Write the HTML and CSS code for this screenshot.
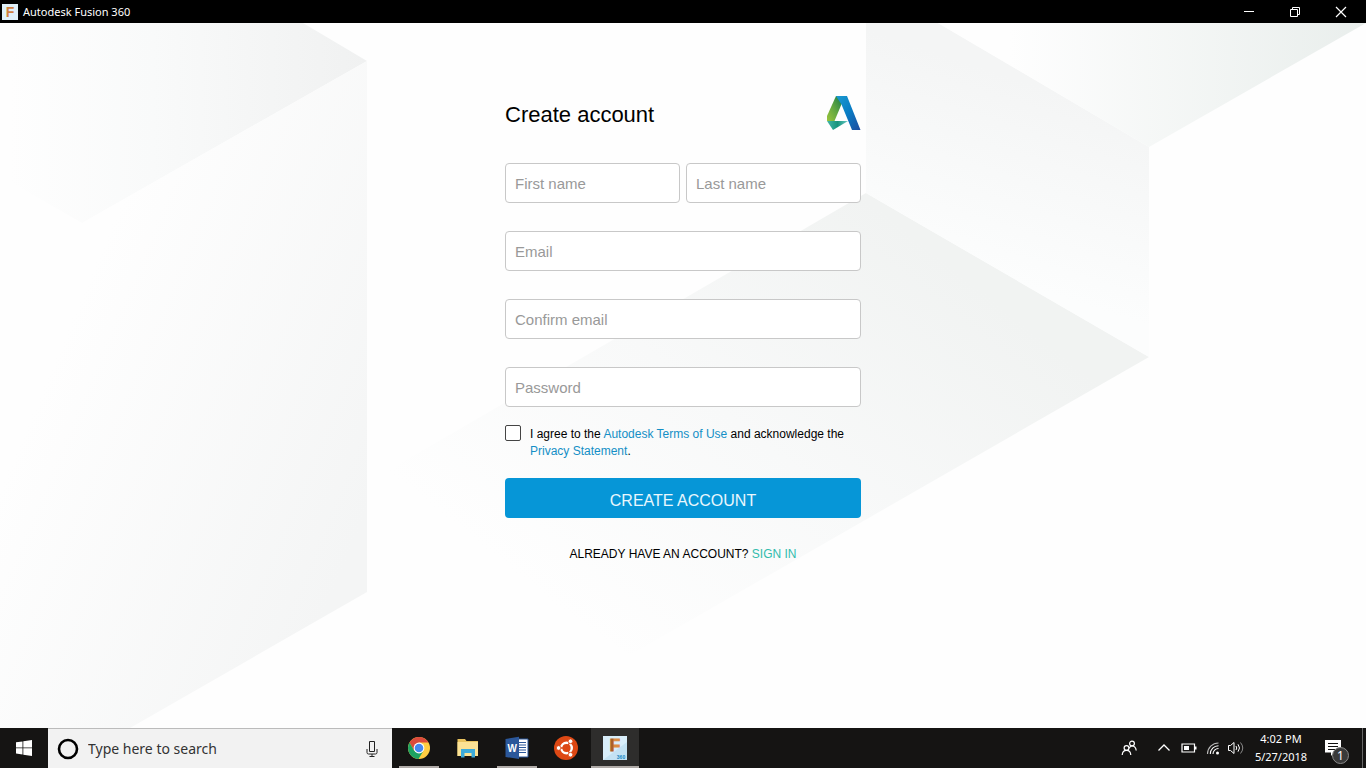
FILE: index.html
```html
<!DOCTYPE html>
<html lang="en">
<head>
<meta charset="utf-8">
<title>Autodesk Fusion 360</title>
<link rel="stylesheet" href="styles.css">
</head>
<body>
<header class="titlebar">
  <svg class="app-icon" viewBox="0 0 16 16" aria-hidden="true">
    <rect width="16" height="16" fill="#dff0f9"/>
    <text class="glyph" x="8" y="13" font-size="14" fill="#d08040">F</text>
  </svg>
  <span class="app-name">Autodesk Fusion 360</span>
  <div class="window-controls">
    <button type="button" aria-label="Minimize"><svg viewBox="0 0 12 12"><path d="M1 5.500h10" stroke="#fff" fill="none"/></svg></button>
    <button type="button" aria-label="Restore"><svg viewBox="0 0 12 12"><path d="M1.500 3.500h7v7h-7zM3.500 3.500v-2h7v7h-2" stroke="#fff" fill="none"/></svg></button>
    <button type="button" aria-label="Close"><svg viewBox="0 0 12 12"><path d="M1 1l10 10M11 1L1 11" stroke="#fff" stroke-width="1.200" fill="none"/></svg></button>
  </div>
</header>

<main class="page">
  <svg class="backdrop" viewBox="0 0 1366 705" preserveAspectRatio="none" aria-hidden="true">
    <defs>
      <linearGradient id="top-left" gradientUnits="userSpaceOnUse" x1="10" y1="0" x2="367" y2="0"><stop offset="0" stop-color="#fefefe"/><stop offset=".4" stop-color="#f9fafa"/><stop offset="1" stop-color="#f0f1f1"/></linearGradient>
      <linearGradient id="left" gradientUnits="userSpaceOnUse" x1="70" y1="300" x2="390" y2="435"><stop offset="0" stop-color="#fefefe"/><stop offset="1" stop-color="#f4f5f5"/></linearGradient>
      <linearGradient id="middle" gradientUnits="userSpaceOnUse" x1="1000" y1="50" x2="940" y2="235"><stop offset="0" stop-color="#f4f5f5"/><stop offset="1" stop-color="#fcfdfd"/></linearGradient>
      <linearGradient id="floor" gradientUnits="userSpaceOnUse" x1="960" y1="250" x2="640" y2="650"><stop offset="0" stop-color="#f1f3f2"/><stop offset=".5" stop-color="#f8f9f9"/><stop offset="1" stop-color="#fefefe"/></linearGradient>
      <linearGradient id="top-right" gradientUnits="userSpaceOnUse" x1="1010" y1="0" x2="1366" y2="0"><stop offset="0" stop-color="#fefefe"/><stop offset="1" stop-color="#e9eeec"/></linearGradient>
    </defs>
    <path d="M0 0H303L367 38L82 200L0 153z" fill="url(#top-left)"/>
    <path d="M82 200L367 38V569L130 705H0V153z" fill="url(#left)"/>
    <path d="M866 170L1149 334L630 632L370 458z" fill="url(#floor)"/>
    <path d="M866 0H938L1149 124V334L866 170z" fill="url(#middle)"/>
    <path d="M938 0H1366L1149 124z" fill="url(#top-right)"/>
  </svg>

  <form class="signup">
    <div class="signup-head">
      <h1>Create account</h1>
      <svg class="logo" viewBox="0 0 34 34" role="img" aria-label="Autodesk">
        <defs>
          <linearGradient id="green" x1="0" y1="1" x2="1" y2="0"><stop offset="0" stop-color="#9bc53d"/><stop offset=".5" stop-color="#60a641"/><stop offset="1" stop-color="#18794a"/></linearGradient>
          <linearGradient id="blue" x1="0" y1="0" x2="1" y2="1"><stop offset="0" stop-color="#1c9bd0"/><stop offset=".5" stop-color="#087cc4"/><stop offset="1" stop-color="#204b9e"/></linearGradient>
          <linearGradient id="teal" x1="0" y1="0" x2="1" y2="0"><stop offset="0" stop-color="#42b7a8"/><stop offset=".5" stop-color="#16947c"/><stop offset="1" stop-color="#6bcac7"/></linearGradient>
        </defs>
        <path d="M9 0H13L15 7L7.500 25H0V20z" fill="url(#green)"/>
        <path d="M0 25H21L6 34z" fill="url(#teal)"/>
        <path d="M9 0H20L33.500 34H25L14.500 8.500z" fill="url(#blue)"/>
      </svg>
    </div>
    <div class="fields">
      <div class="name-row">
        <input type="text" placeholder="First name" aria-label="First name">
        <input type="text" placeholder="Last name" aria-label="Last name">
      </div>
      <input type="email" placeholder="Email" aria-label="Email">
      <input type="email" placeholder="Confirm email" aria-label="Confirm email">
      <input type="password" placeholder="Password" aria-label="Password">
    </div>
    <div class="agree">
      <input type="checkbox" id="agree">
      <label for="agree">I agree to the <a href="#terms">Autodesk Terms of Use</a> and acknowledge the <a href="#privacy">Privacy Statement</a>.</label>
    </div>
    <button class="submit" type="submit">CREATE ACCOUNT</button>
    <p class="signin">ALREADY HAVE AN ACCOUNT? <a href="#signin">SIGN IN</a></p>
  </form>
</main>

<footer class="taskbar">
  <button class="start" type="button" aria-label="Start">
    <svg viewBox="0 0 16 16"><path d="M0 2.300L6.500 1.400V7.500H0zM7.300 1.300L16 0V7.500H7.300zM0 8.300H6.500V14.500L0 13.600zM7.300 8.300H16V16L7.300 14.700z" fill="#fff"/></svg>
  </button>
  <div class="search">
    <svg class="cortana" viewBox="0 0 22 22" aria-hidden="true"><circle cx="11" cy="11" r="9" fill="none" stroke="#000" stroke-width="2.600"/></svg>
    <input type="search" placeholder="Type here to search" aria-label="Type here to search">
    <button type="button" aria-label="Voice search"><svg viewBox="0 0 12 16"><path d="M3.500 .500h5v10h-5zM1 8v3.500q0 1.500 1.500 1.500h7q1.500 0 1.500-1.500V8M6 13v2.500M3.500 15.500h5" fill="none" stroke="#222"/></svg></button>
  </div>
  <nav class="apps" aria-label="Apps">
    <button class="open" type="button" aria-label="Chrome">
      <svg viewBox="0 0 24 24">
        <circle cx="12" cy="12" r="11" fill="#ffcd42"/>
        <path d="M2.500 6.500A11 11 0 0 1 21.500 6.500H12L7.200 14.800z" fill="#dc4a3c"/>
        <path d="M2.500 6.500A11 11 0 0 0 11.500 23L16.500 14.800L12 17L7.200 14.800z" fill="#1da261"/>
        <circle cx="12" cy="12" r="5.400" fill="#fff"/><circle cx="12" cy="12" r="4.300" fill="#4688f1"/>
      </svg>
    </button>
    <button type="button" aria-label="File Explorer">
      <svg viewBox="0 0 24 24">
        <path d="M1.500 3H9l1.500 2H22v15H1.500z" fill="#e9c35e"/>
        <path d="M1.500 6H22v14H1.500z" fill="#fbe294"/>
        <path d="M5 13h14v8.500H15.500V17H8.500v4.500H5z" fill="#3cabda"/>
      </svg>
    </button>
    <button class="open" type="button" aria-label="Word">
      <svg viewBox="0 0 24 24">
        <path d="M13 3h10v18H13z" fill="#fff" stroke="#2b579a"/>
        <path d="M14 6.500h7M14 9h7M14 11.500h7M14 14h7M14 16.500h7" stroke="#2b579a"/>
        <path d="M.500 3L14 .800V23L.500 21z" fill="#2b579a"/>
        <text class="glyph" x="7.200" y="15.500" font-size="10" fill="#fff">W</text>
      </svg>
    </button>
    <button type="button" aria-label="Ubuntu">
      <svg viewBox="0 0 24 24">
        <circle cx="12" cy="12" r="12" fill="#dd4814"/>
        <circle cx="12.500" cy="12" r="5.300" fill="none" stroke="#fff" stroke-width="2.400"/>
        <path d="M12.500 12L5 12M12.500 12L16.300 5.500M12.500 12L16.300 18.500" stroke="#dd4814" stroke-width="1.400"/>
        <g fill="#fff" stroke="#dd4814" stroke-width=".8"><circle cx="4.600" cy="12" r="2.300"/><circle cx="16.500" cy="5.300" r="2.300"/><circle cx="16.500" cy="18.700" r="2.300"/></g>
      </svg>
    </button>
    <button class="current" type="button" aria-label="Autodesk Fusion 360">
      <svg viewBox="0 0 24 24">
        <defs><linearGradient id="bronze"><stop offset=".3" stop-color="#a95f28"/><stop offset=".4" stop-color="#dc8b41"/></linearGradient></defs>
        <rect width="24" height="24" fill="#d9eefa"/><path d="M0 24L24 6V24z" fill="#c4e2f3"/>
        <text class="glyph" x="12" y="15" font-size="17" fill="url(#bronze)" stroke="url(#bronze)">F</text>
        <text class="glyph" x="18" y="23" font-size="5" fill="#1688c5">360</text>
      </svg>
    </button>
  </nav>
  <div class="tray">
    <button class="people" type="button" aria-label="People"><svg viewBox="0 0 16 16"><g fill="none" stroke="#fff" stroke-width="1.200"><circle cx="5.500" cy="8" r="2.400"/><circle cx="11" cy="3.500" r="2.400"/><path d="M1.200 15q.3-4.600 4.300-4.600t4.300 4.600M8.200 8.200Q9 6 11 6q3.700 0 4.200 4.500"/></g></svg></button>
    <button class="chevron" type="button" aria-label="Show hidden icons"><svg viewBox="0 0 16 16"><path d="M2.500 10.500L8 5l5.500 5.500" fill="none" stroke="#fff" stroke-width="1.300"/></svg></button>
    <button type="button" aria-label="Battery"><svg viewBox="0 0 16 16"><path d="M1 4h12.500v8H1z" fill="none" stroke="#fff" stroke-width="1.200"/><path d="M3 6H8v4H3zM14 6.500h1.500v3H14z" fill="#fff"/></svg></button>
    <button type="button" aria-label="Network"><svg viewBox="0 0 16 16"><g fill="none" stroke="#fff" stroke-width="1.100"><path d="M2.500 14A11 11 0 0 1 13.500 3" opacity=".7"/><path d="M5.300 14A8.200 8.200 0 0 1 13.500 5.800M8 14a5.500 5.500 0 0 1 5.500-5.500"/></g><circle cx="12.500" cy="13" r="1.500" fill="#fff"/></svg></button>
    <button class="volume" type="button" aria-label="Volume"><svg viewBox="0 0 16 16"><g fill="none" stroke="#fff"><path d="M.500 5.500h2L6 2.500v11L2.500 10.500h-2z"/><path d="M8 6q1.500 2 0 4M10 4.300q3 3.700 0 7.400"/><path d="M12.500 2.500q4.500 5.500 0 11" opacity=".5"/></g></svg></button>
    <button class="clock" type="button"><span>4:02 PM</span><span>5/27/2018</span></button>
    <button class="notes" type="button" aria-label="Notifications"><svg viewBox="0 0 16 16"><path d="M0 0h16v12.500H9L6 16v-3.500H0z" fill="#fff"/><path d="M3 3.500h10M3 6.500h10M3 9.500h7" stroke="#111"/></svg><span class="badge">1</span></button>
    <button class="desktop" type="button" aria-label="Show desktop"></button>
  </div>
</footer>
</body>
</html>
```

FILE: styles.css
```css
* { box-sizing: border-box; }

body {
  margin: 0;
  min-height: 100vh;
  display: flex;
  flex-direction: column;
  background: #fff;
  color: #000;
  font-family: "Liberation Sans", Arial, sans-serif;
  font-size: 12px;
}

button { margin: 0; padding: 0; border: 0; background: none; color: inherit; font: inherit; }
svg { display: block; }
a { color: #148fc6; text-decoration: none; }
.glyph { font-family: "Liberation Sans", Arial, sans-serif; font-weight: 700; text-anchor: middle; }

.titlebar {
  display: flex;
  align-items: center;
  height: 23px;
  padding-left: 2px;
  background: #000;
  color: #fff;
  font-family: "Noto Sans", sans-serif;
  font-size: 11px;
}
.app-icon { width: 16px; height: 16px; margin-right: 5px; }
.window-controls { display: flex; margin-left: auto; margin-right: 2px; }
.window-controls button { width: 46px; height: 20px; display: grid; place-items: center; }
.window-controls svg { width: 12px; height: 12px; }

.page { position: relative; flex: 1; background: #fefefe; }
.backdrop { position: absolute; inset: 0; width: 100%; height: 100%; }

.signup { position: relative; width: 100%; max-width: 356px; margin: 0 auto; padding: 73px 0 28px; }
.signup-head { display: flex; align-items: center; justify-content: space-between; margin-bottom: 33px; }
.signup-head h1 { margin: 0; padding-top: 4px; font-size: 22px; line-height: 30px; font-weight: 400; }
.logo { width: 34px; height: 34px; }

.fields { display: grid; gap: 28px; }
.name-row { display: grid; grid-template-columns: 1fr 1fr; gap: 6px; }
.fields input {
  width: 100%;
  height: 40px;
  padding: 0 9px;
  border: 1px solid #c8c8c8;
  border-radius: 4px;
  background: #fff;
  font: inherit;
  font-size: 15px;
}
.fields input::placeholder { color: #999; opacity: 1; }

.agree { display: flex; gap: 9px; margin: 18px 0; line-height: 17px; }
.agree label { padding-top: 1px; }
.agree input {
  appearance: none;
  flex: none;
  width: 16px;
  height: 16px;
  margin: 0;
  border: 1px solid #444;
  border-radius: 2px;
  background: #fff;
}
.agree input:checked { background: #0696d7; }

.submit {
  width: 100%;
  height: 40px;
  padding-top: 6px;
  border-radius: 4px;
  background: #0696d7;
  color: #e9f7fd;
  font-size: 16px;
}
.signin { margin: 28px 0 0; line-height: 17px; text-align: center; }
.signin a { color: #32bcad; }

.taskbar {
  display: flex;
  height: 40px;
  background: #151413;
  color: #fff;
  font-family: "Noto Sans", sans-serif;
}
.start { width: 48px; display: grid; place-items: center; }
.start svg { width: 16px; height: 16px; }
.search {
  display: flex;
  align-items: center;
  width: 344px;
  padding: 0 14px 0 9px;
  border-top: 1px solid #bbb;
  background: #f2f2f2;
}
.cortana { width: 22px; height: 22px; margin-right: 9px; }
.search input { flex: 1; min-width: 0; padding: 0; border: 0; background: none; font: inherit; font-size: 14px; }
.search input::placeholder { color: #333; opacity: 1; }
.search button svg { width: 12px; height: 16px; }

.apps { display: flex; gap: 1px; margin-left: 3px; }
.apps button { width: 48px; display: grid; place-items: center; }
.apps svg { width: 24px; height: 24px; }
.apps .open { background: linear-gradient(#b0aba8, #b0aba8) center bottom / 40px 2px no-repeat; }
.apps .current { background: #2e2d2c; box-shadow: inset 0 -2px #b0aba8; }

.tray { display: flex; align-items: center; margin-left: auto; }
.tray button { width: 24px; height: 40px; display: grid; place-items: center; }
.tray svg { width: 16px; height: 16px; }
.tray .people { width: 36px; }
.tray .chevron { width: 34px; margin-right: -4px; }
.tray .volume { width: 22px; }
.tray .clock { width: 68px; align-content: center; font-size: 11px; line-height: 18px; }
.tray .notes { position: relative; width: 36px; margin-right: 11px; }
.badge {
  position: absolute;
  right: 2px;
  bottom: 4px;
  width: 17px;
  height: 17px;
  border: 1px solid #8a8a8a;
  border-radius: 50%;
  background: #3a3a3a;
  font-size: 12px;
  line-height: 15px;
  text-align: center;
}
.tray .desktop { width: 4px; border-left: 1px solid #666; }
```
